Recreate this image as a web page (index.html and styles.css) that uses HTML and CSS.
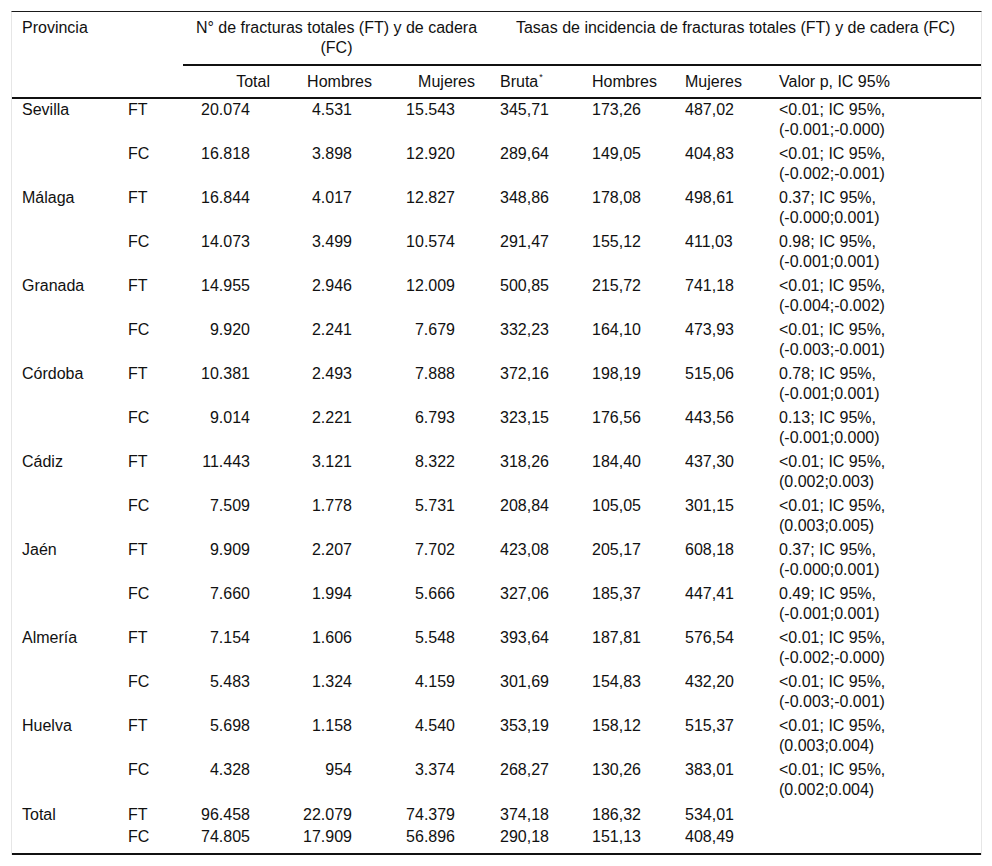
FILE: index.html
```html
<!DOCTYPE html>
<html lang="es">
<head>
<meta charset="utf-8">
<title>Fracturas por provincia</title>
<link rel="stylesheet" href="styles.css">
</head>
<body>
<table class="data">
  <colgroup>
    <col class="c-prov"><col class="c-tipo"><col class="c-n1"><col class="c-n2"><col class="c-n3">
    <col class="c-t1"><col class="c-t2"><col class="c-t3"><col class="c-p">
  </colgroup>
  <thead>
    <tr>
      <th class="h-left h-span" colspan="2" rowspan="2">Provincia</th>
      <th class="h-group" colspan="3">N°&nbsp;de fracturas totales (FT) y de cadera (FC)</th>
      <th class="h-group" colspan="4">Tasas de incidencia de fracturas totales (FT) y de cadera (FC)</th>
    </tr>
    <tr>
      <th class="h-num">Total</th>
      <th class="h-num">Hombres</th>
      <th class="h-num">Mujeres</th>
      <th class="h-txt">Bruta<sup>*</sup></th>
      <th class="h-txt">Hombres</th>
      <th class="h-txt">Mujeres</th>
      <th class="h-txt">Valor p, IC 95%</th>
    </tr>
  </thead>
  <tbody>
    <tr><td>Sevilla</td><td>FT</td><td class="num">20.074</td><td class="num">4.531</td><td class="num">15.543</td><td>345,71</td><td>173,26</td><td>487,02</td><td>&lt;0.01; IC 95%,<br>(-0.001;-0.000)</td></tr>
    <tr><td></td><td>FC</td><td class="num">16.818</td><td class="num">3.898</td><td class="num">12.920</td><td>289,64</td><td>149,05</td><td>404,83</td><td>&lt;0.01; IC 95%,<br>(-0.002;-0.001)</td></tr>
    <tr><td>Málaga</td><td>FT</td><td class="num">16.844</td><td class="num">4.017</td><td class="num">12.827</td><td>348,86</td><td>178,08</td><td>498,61</td><td>0.37; IC 95%,<br>(-0.000;0.001)</td></tr>
    <tr><td></td><td>FC</td><td class="num">14.073</td><td class="num">3.499</td><td class="num">10.574</td><td>291,47</td><td>155,12</td><td>411,03</td><td>0.98; IC 95%,<br>(-0.001;0.001)</td></tr>
    <tr><td>Granada</td><td>FT</td><td class="num">14.955</td><td class="num">2.946</td><td class="num">12.009</td><td>500,85</td><td>215,72</td><td>741,18</td><td>&lt;0.01; IC 95%,<br>(-0.004;-0.002)</td></tr>
    <tr><td></td><td>FC</td><td class="num">9.920</td><td class="num">2.241</td><td class="num">7.679</td><td>332,23</td><td>164,10</td><td>473,93</td><td>&lt;0.01; IC 95%,<br>(-0.003;-0.001)</td></tr>
    <tr><td>Córdoba</td><td>FT</td><td class="num">10.381</td><td class="num">2.493</td><td class="num">7.888</td><td>372,16</td><td>198,19</td><td>515,06</td><td>0.78; IC 95%,<br>(-0.001;0.001)</td></tr>
    <tr><td></td><td>FC</td><td class="num">9.014</td><td class="num">2.221</td><td class="num">6.793</td><td>323,15</td><td>176,56</td><td>443,56</td><td>0.13; IC 95%,<br>(-0.001;0.000)</td></tr>
    <tr><td>Cádiz</td><td>FT</td><td class="num">11.443</td><td class="num">3.121</td><td class="num">8.322</td><td>318,26</td><td>184,40</td><td>437,30</td><td>&lt;0.01; IC 95%,<br>(0.002;0.003)</td></tr>
    <tr><td></td><td>FC</td><td class="num">7.509</td><td class="num">1.778</td><td class="num">5.731</td><td>208,84</td><td>105,05</td><td>301,15</td><td>&lt;0.01; IC 95%,<br>(0.003;0.005)</td></tr>
    <tr><td>Jaén</td><td>FT</td><td class="num">9.909</td><td class="num">2.207</td><td class="num">7.702</td><td>423,08</td><td>205,17</td><td>608,18</td><td>0.37; IC 95%,<br>(-0.000;0.001)</td></tr>
    <tr><td></td><td>FC</td><td class="num">7.660</td><td class="num">1.994</td><td class="num">5.666</td><td>327,06</td><td>185,37</td><td>447,41</td><td>0.49; IC 95%,<br>(-0.001;0.001)</td></tr>
    <tr><td>Almería</td><td>FT</td><td class="num">7.154</td><td class="num">1.606</td><td class="num">5.548</td><td>393,64</td><td>187,81</td><td>576,54</td><td>&lt;0.01; IC 95%,<br>(-0.002;-0.000)</td></tr>
    <tr><td></td><td>FC</td><td class="num">5.483</td><td class="num">1.324</td><td class="num">4.159</td><td>301,69</td><td>154,83</td><td>432,20</td><td>&lt;0.01; IC 95%,<br>(-0.003;-0.001)</td></tr>
    <tr><td>Huelva</td><td>FT</td><td class="num">5.698</td><td class="num">1.158</td><td class="num">4.540</td><td>353,19</td><td>158,12</td><td>515,37</td><td>&lt;0.01; IC 95%,<br>(0.003;0.004)</td></tr>
    <tr><td></td><td>FC</td><td class="num">4.328</td><td class="num">954</td><td class="num">3.374</td><td>268,27</td><td>130,26</td><td>383,01</td><td>&lt;0.01; IC 95%,<br>(0.002;0.004)</td></tr>
    <tr class="total first"><td>Total</td><td>FT</td><td class="num">96.458</td><td class="num">22.079</td><td class="num">74.379</td><td>374,18</td><td>186,32</td><td>534,01</td><td></td></tr>
    <tr class="total last"><td></td><td>FC</td><td class="num">74.805</td><td class="num">17.909</td><td class="num">56.896</td><td>290,18</td><td>151,13</td><td>408,49</td><td></td></tr>
  </tbody>
</table>
</body>
</html>
```
FILE: styles.css
```css
html, body {
  margin: 0;
  padding: 0;
  background: #ffffff;
}

body {
  padding: 11px 0 0 11px;
  font-family: "Liberation Sans", Arial, Helvetica, sans-serif;
  font-size: 16px;
  line-height: 20px;
  color: #111111;
}

.data {
  width: 971px;
  table-layout: fixed;
  border-collapse: separate;
  border-spacing: 0;
  border-top: 1px solid #1a1a1a;
  border-left: 1px solid #e6e6e6;
  border-right: 1px solid #e6e6e6;
}

.c-prov { width: 106px; }
.c-tipo { width: 65px; }
.c-n1 { width: 102px; }
.c-n2 { width: 102px; }
.c-n3 { width: 103px; }
.c-t1 { width: 92px; }
.c-t2 { width: 93px; }
.c-t3 { width: 94px; }
.c-p { width: 212px; }

th {
  font-weight: normal;
  vertical-align: top;
}

thead tr:first-child th {
  padding: 6px 10px 6px;
}

thead tr:nth-child(2) th {
  padding: 6px 10px 5px;
  border-bottom: 2px solid #111111;
}

.h-left {
  text-align: left;
}

.h-span {
  border-bottom: 2px solid #111111;
}

.h-group {
  text-align: center;
  border-bottom: 2px solid #111111;
}

.h-num {
  text-align: right;
}

thead tr:nth-child(2) th.h-num {
  padding-right: 15px;
}

.h-txt {
  text-align: left;
}

sup {
  font-size: 9px;
  line-height: 0;
  vertical-align: 7px;
  margin-left: 1px;
}

td {
  padding: 1px 10px 3px;
  vertical-align: top;
  text-align: left;
  white-space: nowrap;
}

td.num {
  text-align: right;
  padding-right: 35px;
}

tr.total td {
  padding-top: 1px;
  padding-bottom: 1px;
}

tr.total.first td {
  padding-top: 2px;
}

tr.total.last td {
  padding-bottom: 6px;
  border-bottom: 2px solid #111111;
}
```
